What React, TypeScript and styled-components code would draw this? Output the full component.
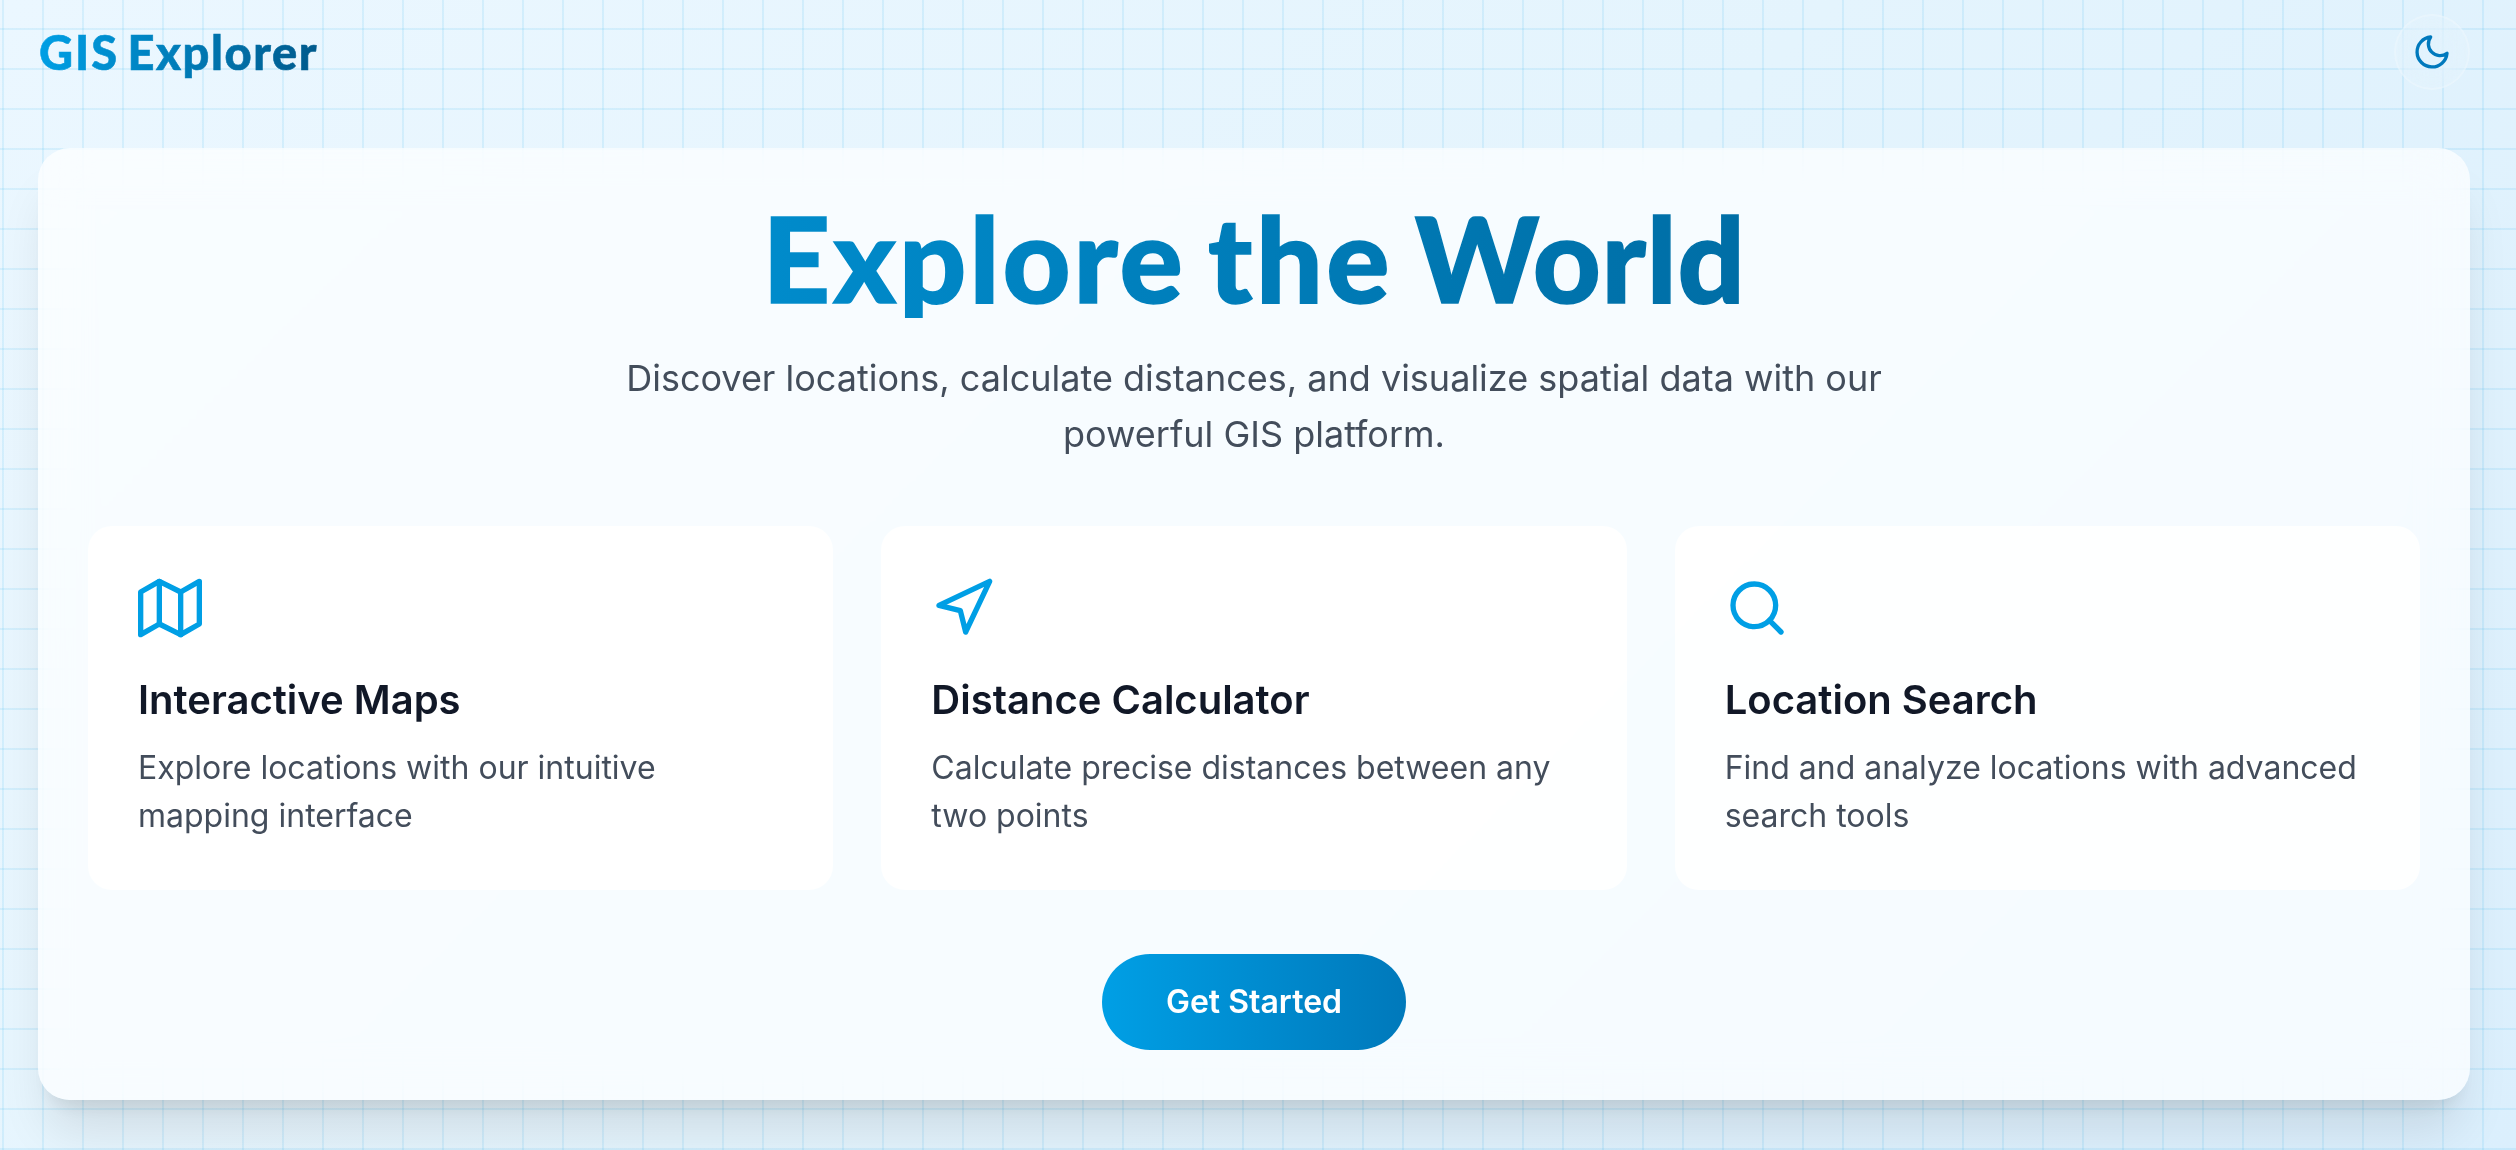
import React from 'react';
import styled, { createGlobalStyle } from 'styled-components';

const GlobalStyle = createGlobalStyle`
  *, *::before, *::after { box-sizing: border-box; }
  html { height: 100%; }
  body {
    margin: 0;
    height: 1150px;
    overflow: hidden;
    font-family: Inter, "Liberation Sans", sans-serif;
    -webkit-font-smoothing: antialiased;
  }
`;

const Page = styled.div`
  height: 1150px;
  padding: 14px 46px 50px 38px;
  overflow: hidden;
  background-image:
    linear-gradient(to right, rgba(14, 165, 233, 0.1) 2px, transparent 2px),
    linear-gradient(to bottom, rgba(14, 165, 233, 0.1) 2px, transparent 2px),
    linear-gradient(135deg, #ebf7ff 0%, #e4f4fd 50%, #dbeffd 100%);
  background-size: 40px 40px, 40px 40px, 100% 100%;
  background-position: 2px 0, 0 28px, 0 0;
`;

const Header = styled.header`
  display: flex;
  align-items: center;
  justify-content: space-between;
  height: 76px;
  margin-bottom: 58px;
`;

const Logo = styled.div`
  padding-left: 1px;
  font-family: Lato, sans-serif;
  font-size: 47px;
  font-weight: 900;
  line-height: 64px;
  white-space: nowrap;
  color: transparent;
  -webkit-text-stroke: 0.6px transparent;
  background: linear-gradient(to right, #009fe5, #005a8c);
  -webkit-background-clip: text;
  background-clip: text;
`;

const Word = styled.span<{ $spacing: number; $gap?: number }>`
  letter-spacing: ${(p) => p.$spacing}px;
  margin-right: ${(p) => p.$gap ?? 0}px;
`;

const ThemeButton = styled.button`
  display: grid;
  place-items: center;
  width: 76px;
  height: 76px;
  padding: 0;
  border: 2px solid rgba(255, 255, 255, 0.2);
  border-radius: 50%;
  background: rgba(255, 255, 255, 0.1);
  backdrop-filter: blur(24px);
  color: #0079bd;
`;

const Panel = styled.main`
  display: flex;
  flex-direction: column;
  align-items: center;
  height: 952px;
  padding: 50px;
  border-radius: 32px;
  background: rgba(255, 255, 255, 0.72);
  backdrop-filter: blur(24px);
  box-shadow: 0 40px 50px -10px rgba(0, 0, 0, 0.1), 0 16px 20px -12px rgba(0, 0, 0, 0.1);
`;

const Title = styled.h1`
  width: 100%;
  height: 120px;
  margin: 0 0 32px;
  text-align: center;
  font-family: Lato, sans-serif;
  font-size: 118px;
  font-weight: 900;
  line-height: 120px;
  white-space: nowrap;
  color: transparent;
  -webkit-text-stroke: 1.5px transparent;
  background: linear-gradient(to right, #009fe5, #005a8c);
  -webkit-background-clip: text;
  background-clip: text;
`;

const Subtitle = styled.p`
  width: 1344px;
  margin: 0 0 64px;
  text-align: center;
  font-size: 36px;
  line-height: 56px;
  color: #434d5b;
`;

const Cards = styled.section`
  display: grid;
  grid-template-columns: repeat(3, 1fr);
  gap: 48px;
  width: 100%;
  margin-bottom: 64px;
`;

const Card = styled.article`
  height: 364px;
  padding: 50px;
  border-radius: 24px;
  background: rgba(255, 255, 255, 0.9);
`;

const Icon = styled.svg<{ $size: number }>`
  display: block;
  width: ${(p) => p.$size}px;
  height: ${(p) => p.$size}px;
  fill: none;
  stroke: currentColor;
  stroke-width: 2;
  stroke-linecap: round;
  stroke-linejoin: round;
`;

const CardIcon = styled(Icon)`
  margin-bottom: 32px;
  color: #009fe5;
`;

const CardTitle = styled.h3`
  margin: 0 0 16px;
  font-size: 40px;
  font-weight: 600;
  line-height: 56px;
  color: #111827;
`;

const CardText = styled.p`
  margin: 0;
  font-size: 32px;
  line-height: 48px;
  color: #434d5b;
`;

const StartButton = styled.button`
  width: 304px;
  height: 96px;
  padding: 0;
  border: 0;
  border-radius: 48px;
  font: 600 32px/48px Inter, sans-serif;
  color: #fff;
  background: linear-gradient(to right, #009fe5, #0079bb);
`;

const features = [
  {
    title: 'Interactive Maps',
    text: 'Explore locations with our intuitive mapping interface',
    icon: (
      <>
        <path d="M1 6v16l7-4 8 4 7-4V2l-7 4-8-4-7 4z" />
        <path d="M8 2v16M16 6v16" />
      </>
    ),
  },
  {
    title: 'Distance Calculator',
    text: 'Calculate precise distances between any two points',
    icon: <path d="M3 11 22 2l-9 19-2-8-8-2z" />,
  },
  {
    title: 'Location Search',
    text: 'Find and analyze locations with advanced search tools',
    icon: (
      <>
        <circle cx="11" cy="11" r="8" />
        <path d="m21 21-4.35-4.35" />
      </>
    ),
  },
];

export default function App() {
  return (
    <>
      <GlobalStyle />
      <Page>
        <Header>
          <Logo>
            <Word $spacing={2} $gap={-3}>GIS</Word> <Word $spacing={1.6}>Explorer</Word>
          </Logo>
          <ThemeButton aria-label="Toggle theme">
            <Icon $size={40} viewBox="0 0 24 24">
              <path d="M21 12.79A9 9 0 1 1 11.21 3 7 7 0 0 0 21 12.79z" />
            </Icon>
          </ThemeButton>
        </Header>
        <Panel>
          <Title>
            <Word $spacing={3} $gap={-6}>Explore</Word>{' '}
            <Word $spacing={3.5} $gap={-6.5}>the</Word>{' '}
            <Word $spacing={0.7}>World</Word>
          </Title>
          <Subtitle>
            Discover locations, calculate distances, and visualize spatial data with our powerful GIS
            platform.
          </Subtitle>
          <Cards>
            {features.map((f) => (
              <Card key={f.title}>
                <CardIcon $size={64} viewBox="0 0 24 24">
                  {f.icon}
                </CardIcon>
                <CardTitle>{f.title}</CardTitle>
                <CardText>{f.text}</CardText>
              </Card>
            ))}
          </Cards>
          <StartButton>Get Started</StartButton>
        </Panel>
      </Page>
    </>
  );
}
